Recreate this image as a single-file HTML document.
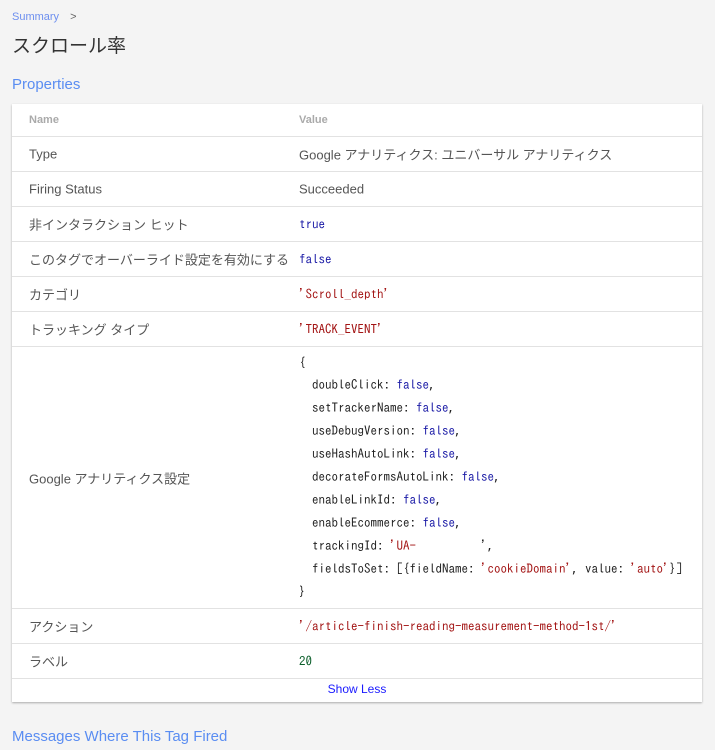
<!DOCTYPE html>
<html><head><meta charset="utf-8"><style>
*{margin:0;padding:0;box-sizing:border-box}
body{width:715px;height:750px;background:#f4f4f4;font-family:"Liberation Sans","Noto Sans CJK JP",sans-serif;color:#555;overflow:hidden;position:relative}
.a{position:absolute}
.card{position:absolute;left:12px;top:104px;width:690px;height:598px;background:#fff;box-shadow:0 1px 2px rgba(0,0,0,.3)}
.row{position:absolute;left:0;width:690px;border-bottom:1px solid #e2e2e2;font-size:13px}
.row .k{position:absolute;left:17px;top:50%;transform:translateY(-50%);white-space:nowrap}
.row .v{position:absolute;left:287px;top:50%;transform:translateY(-50%);white-space:nowrap}
.m{font-family:"IPAGothic","Liberation Mono",monospace;font-size:13px;color:#222}
.b{color:#1a1aa6}.r{color:#a31515}.g{color:#0b5e2a}
.code{line-height:22.9px}
</style></head><body>
<div class="a" style="left:12px;top:11px;font-size:11px;color:#6d8fef">Summary <span style="color:#666;margin-left:8px">&gt;</span></div>
<div class="a" style="left:12px;top:31px;font-size:19px;color:#333;font-family:'Noto Sans CJK JP',sans-serif">スクロール率</div>
<div class="a" style="left:12px;top:76px;font-size:15px;color:#5a8df2">Properties</div>
<div class="card">
<div class="row" style="top:0;height:33px;font-weight:bold;font-size:11px;color:#aaa"><span class="k">Name</span><span class="v">Value</span></div>
<div class="row" style="top:33px;height:35px"><span class="k">Type</span><span class="v">Google アナリティクス: ユニバーサル アナリティクス</span></div>
<div class="row" style="top:68px;height:35px"><span class="k">Firing Status</span><span class="v">Succeeded</span></div>
<div class="row" style="top:103px;height:35px"><span class="k">非インタラクション ヒット</span><span class="v m b">true</span></div>
<div class="row" style="top:138px;height:35px"><span class="k">このタグでオーバーライド設定を有効にする</span><span class="v m b">false</span></div>
<div class="row" style="top:173px;height:35px"><span class="k">カテゴリ</span><span class="v m r">'Scroll_depth'</span></div>
<div class="row" style="top:208px;height:35px"><span class="k">トラッキング タイプ</span><span class="v m r">'TRACK_EVENT'</span></div>
<div class="row" style="top:243px;height:262px"><span class="k">Google アナリティクス設定</span><div class="v m code" style="white-space:pre">{
  doubleClick: <span class="b">false</span>,
  setTrackerName: <span class="b">false</span>,
  useDebugVersion: <span class="b">false</span>,
  useHashAutoLink: <span class="b">false</span>,
  decorateFormsAutoLink: <span class="b">false</span>,
  enableLinkId: <span class="b">false</span>,
  enableEcommerce: <span class="b">false</span>,
  trackingId: <span class="r">'UA-          </span>',
  fieldsToSet: [{fieldName: <span class="r">'cookieDomain'</span>, value: <span class="r">'auto'</span>}]
}</div></div>
<div class="row" style="top:505px;height:35px"><span class="k">アクション</span><span class="v m r">'/article-finish-reading-measurement-method-1st/'</span></div>
<div class="row" style="top:540px;height:35px"><span class="k">ラベル</span><span class="v m g">20</span></div>
<div class="a" style="top:578px;left:0;width:690px;text-align:center;font-size:12px;color:#1a1aff">Show Less</div>
</div>
<div class="a" style="left:12px;top:728px;font-size:15px;color:#5a8df2">Messages Where This Tag Fired</div>
</body></html>
